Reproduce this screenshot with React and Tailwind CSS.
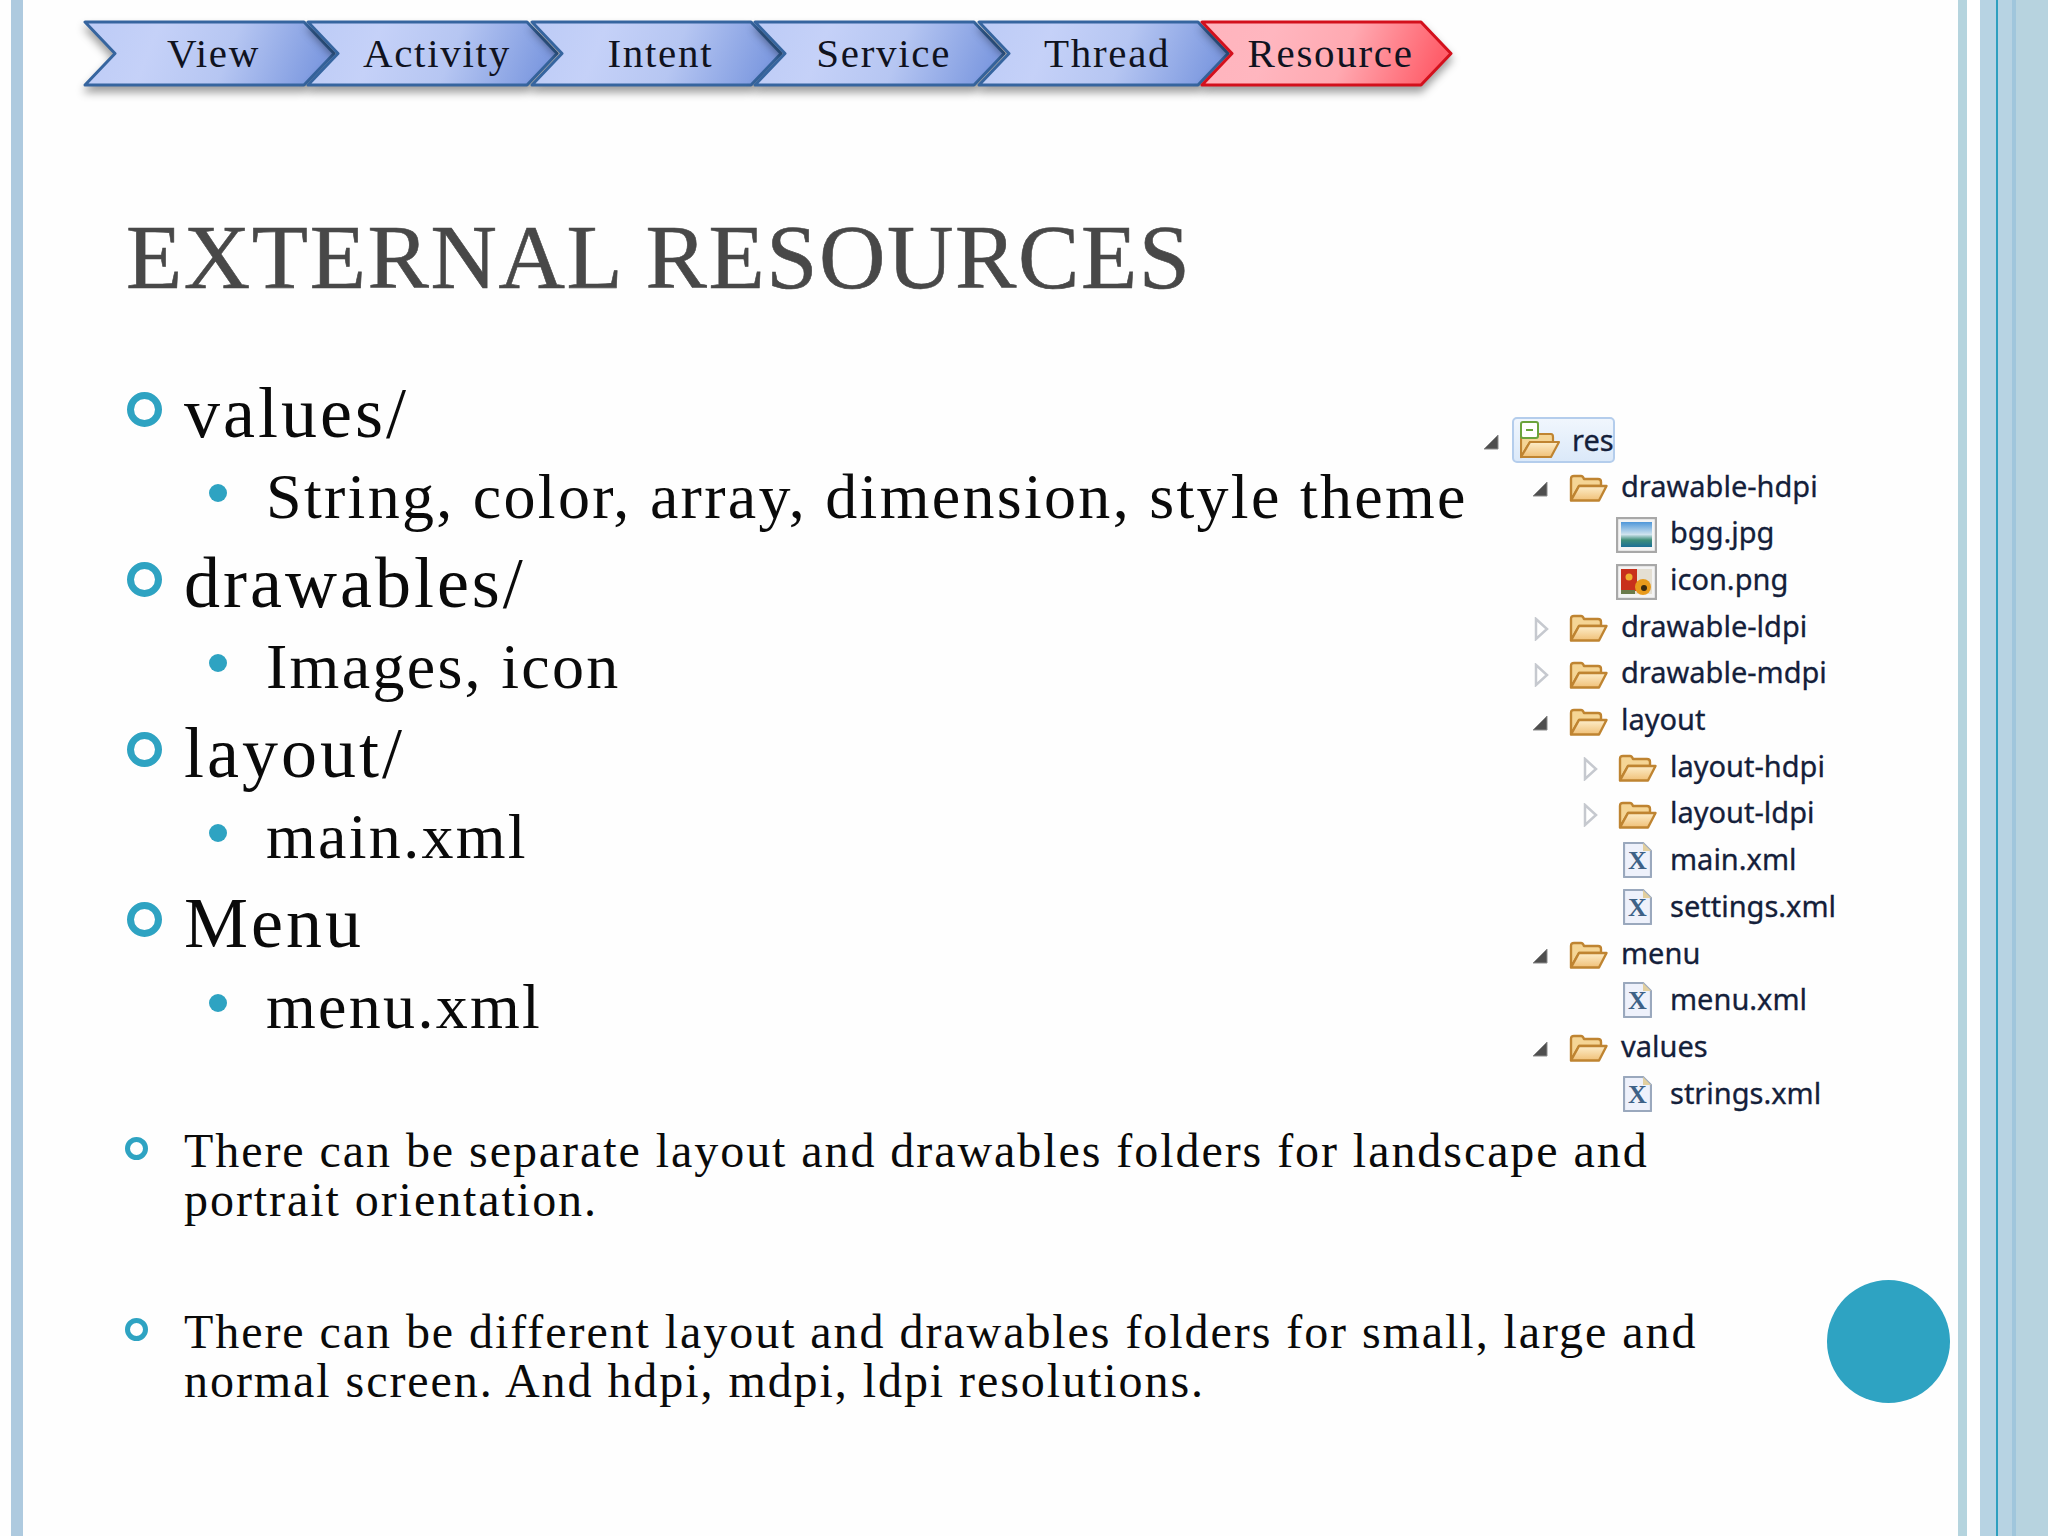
const serif = "font-['Liberation_Serif',serif]";

const steps = ["View", "Activity", "Intent", "Service", "Thread", "Resource"];

function Chevron({ label, index }) {
  const red = label === "Resource";
  const id = `chev-${index}`;
  return (
    <div className={`relative flex h-[65px] w-[250px] shrink-0 items-center justify-center pl-[9px] ${index > 0 ? "-ml-[26.6px]" : ""}`}>
      <svg className="absolute inset-0 overflow-visible drop-shadow-[0_6px_4px_rgba(0,0,0,0.38)]" width="250" height="65" viewBox="0 0 250 65">
        <defs>
          <linearGradient id={id} x1="0" y1="0" x2="1" y2="0.1">
            <stop offset="0" stopColor={red ? "#ffb4bd" : "#bccbf6"} />
            <stop offset="0.3" stopColor={red ? "#ffb6bf" : "#c5d1f8"} />
            <stop offset="0.62" stopColor={red ? "#ffa9b1" : "#b6c6f2"} />
            <stop offset="1" stopColor={red ? "#ff5f6b" : "#7e9ae0"} />
          </linearGradient>
        </defs>
        <polygon
          points="1,1 220,1 250,32.5 220,64 1,64 31,32.5"
          fill={`url(#${id})`}
          stroke={red ? "#d3101c" : "#36659f"}
          strokeWidth="3"
          strokeLinejoin="round"
        />
      </svg>
      <span className={`relative -mt-[1px] text-[41px] leading-none tracking-[1.7px] text-[#10131f] ${serif}`}>{label}</span>
    </div>
  );
}

function Ring({ className }) {
  return <span className={`block shrink-0 rounded-full border-[#2ea3c2] ${className}`} />;
}

function ListGroup({ head, sub }) {
  return (
    <div className="flex flex-col">
      <div className="flex h-[80px] items-start">
        <Ring className="mt-[19px] mr-[22px] h-[35px] w-[35px] border-[7px]" />
        <span className="text-[72px] leading-[80px] tracking-[3px] whitespace-nowrap">{head}</span>
      </div>
      <div className="flex h-[85px] items-start pl-[82px]">
        <span className="mt-[31px] mr-[39px] block h-[18px] w-[18px] shrink-0 rounded-full bg-[#2ea3c2]" />
        <span className="text-[64px] leading-[87px] tracking-[2.3px] whitespace-nowrap">{sub}</span>
      </div>
    </div>
  );
}

function Folder({ id }) {
  return (
    <svg width="39" height="28" viewBox="0 0 39 28" className="mt-[3px]">
      <defs>
        <linearGradient id={id} x1="0" y1="0" x2="0" y2="1">
          <stop offset="0" stopColor="#fdeecb" />
          <stop offset="1" stopColor="#f0c077" />
        </linearGradient>
      </defs>
      <path d="M2 25 V5 Q2 2 5 2 H12 Q14 2 15 5 H29 Q32 5 32 8 V12 H10 L2 26 Z" fill="#f5d595" stroke="#bf8431" strokeWidth="2.4" strokeLinejoin="round" />
      <path d="M2 26.5 L10 12 H37.5 L30 26.5 Z" fill={`url(#${id})`} stroke="#bf8431" strokeWidth="2.4" strokeLinejoin="round" />
    </svg>
  );
}

function RootFolder() {
  return (
    <svg width="40" height="38" viewBox="0 0 40 38">
      <defs>
        <linearGradient id="root-f" x1="0" y1="0" x2="0" y2="1">
          <stop offset="0" stopColor="#fdeecb" />
          <stop offset="1" stopColor="#f0c077" />
        </linearGradient>
      </defs>
      <path d="M1 35 V15 H14 L17 13 H31 Q33 13 33 16 V21 H10 L1 36 Z" fill="#f5d595" stroke="#bf8431" strokeWidth="2.2" strokeLinejoin="round" />
      <path d="M1 36 L10 21 H39 L31 36 Z" fill="url(#root-f)" stroke="#bf8431" strokeWidth="2.2" strokeLinejoin="round" />
      <rect x="1" y="1" width="17" height="16" rx="2" fill="#ffffff" stroke="#6aa33c" strokeWidth="2" />
      <path d="M6 9 H13" stroke="#6aa33c" strokeWidth="2" />
    </svg>
  );
}

function ImageIcon({ kind }) {
  return (
    <svg width="41" height="36" viewBox="0 0 41 36" className="-ml-[2px] mt-[4px]">
      <defs>
        <linearGradient id="sky" x1="0" y1="0" x2="0" y2="1">
          <stop offset="0" stopColor="#4f97d9" />
          <stop offset="0.5" stopColor="#cfe3ee" />
          <stop offset="0.72" stopColor="#3f8f7a" />
          <stop offset="1" stopColor="#1c6f96" />
        </linearGradient>
      </defs>
      <rect x="1" y="1" width="39" height="34" fill="#f4f4f4" stroke="#a8a8a8" strokeWidth="2.4" />
      {kind === "bgg" ? (
        <rect x="5" y="5" width="31" height="25" fill="url(#sky)" />
      ) : (
        <g>
          <rect x="5" y="5" width="31" height="25" fill="#e4dfd3" />
          <rect x="5" y="5" width="16" height="22" fill="#c8301c" />
          <circle cx="13" cy="13" r="3.5" fill="#f0b030" />
          <circle cx="27" cy="23" r="8" fill="#e89a1c" />
          <circle cx="28" cy="24" r="3" fill="#3a2a10" />
          <rect x="5" y="26" width="14" height="4" fill="#6a7a4a" />
        </g>
      )}
    </svg>
  );
}

function XmlIcon() {
  return (
    <svg width="29" height="36" viewBox="0 0 29 36" className="ml-[5px]">
      <path d="M1 1 H20 L28 9 V35 H1 Z" fill="#eef1fb" stroke="#9aa8bd" strokeWidth="2.2" strokeLinejoin="round" />
      <path d="M20 1 V9 H28 Z" fill="#e2cf9f" />
      <text x="14.5" y="27" textAnchor="middle" fontSize="26" fontWeight="700" fill="#3d6187" fontFamily="Liberation Serif, serif">X</text>
    </svg>
  );
}

function Arrow({ open }) {
  if (open) {
    return (
      <svg width="16" height="16" viewBox="0 0 16 16" className="mt-[5px]">
        <polygon points="15,1 15,15 1,15" fill="#4e4e4e" stroke="#8a8a8a" strokeWidth="1" />
      </svg>
    );
  }
  return (
    <svg width="18" height="24" viewBox="0 0 18 24" className="mt-[4px]">
      <polygon points="4,2 15,12 4,22" fill="#ffffff" stroke="#c6c9cf" strokeWidth="2.5" />
    </svg>
  );
}

const treeRows = [
  { level: 1, arrow: "open", icon: "folder", label: "drawable-hdpi" },
  { level: 2, icon: "bgg", label: "bgg.jpg" },
  { level: 2, icon: "png", label: "icon.png" },
  { level: 1, arrow: "closed", icon: "folder", label: "drawable-ldpi" },
  { level: 1, arrow: "closed", icon: "folder", label: "drawable-mdpi" },
  { level: 1, arrow: "open", icon: "folder", label: "layout" },
  { level: 2, arrow: "closed", icon: "folder", label: "layout-hdpi" },
  { level: 2, arrow: "closed", icon: "folder", label: "layout-ldpi" },
  { level: 2, icon: "xml", label: "main.xml" },
  { level: 2, icon: "xml", label: "settings.xml" },
  { level: 1, arrow: "open", icon: "folder", label: "menu" },
  { level: 2, icon: "xml", label: "menu.xml" },
  { level: 1, arrow: "open", icon: "folder", label: "values" },
  { level: 2, icon: "xml", label: "strings.xml" },
];

function TreeRow({ row, index }) {
  return (
    <div className={`flex h-[46.7px] items-center ${row.level === 1 ? "pl-[49px]" : "pl-[98px]"}`}>
      <span className="flex w-[37px] shrink-0 items-center">{row.arrow ? <Arrow open={row.arrow === "open"} /> : null}</span>
      <span className="flex w-[53px] shrink-0 items-center">
        {row.icon === "folder" && <Folder id={`folder-${index}`} />}
        {row.icon === "bgg" && <ImageIcon kind="bgg" />}
        {row.icon === "png" && <ImageIcon kind="png" />}
        {row.icon === "xml" && <XmlIcon />}
      </span>
      <span className="-ml-[1px] -mt-[3px] whitespace-nowrap text-[29px] leading-none text-[#14203a] [-webkit-text-stroke:0.3px_#14203a]">{row.label}</span>
    </div>
  );
}

function Tree() {
  return (
    <div className="mt-[43.6px] flex w-[440px] shrink-0 flex-col font-['Noto_Sans',sans-serif]">
      <div className="flex h-[46.7px] items-center">
        <span className="flex w-[29px] shrink-0 items-center"><Arrow open /></span>
        <div className="flex h-[46px] w-[103px] items-center rounded-[5px] border-2 border-[#b4cdec] bg-gradient-to-b from-[#f0f6fd] to-[#dbe9f9] pl-[6px]">
          <span className="flex w-[53px] shrink-0 items-center"><RootFolder /></span>
          <span className="-ml-[1px] -mt-[1px] text-[29px] leading-none text-[#14203a] [-webkit-text-stroke:0.3px_#14203a]">res</span>
        </div>
      </div>
      {treeRows.map((row, i) => (
        <TreeRow key={row.label} row={row} index={i} />
      ))}
    </div>
  );
}

function Note({ children, className }) {
  return (
    <div className={`flex items-start ${className}`}>
      <Ring className="-ml-[2px] mt-[11px] mr-[36px] h-[23px] w-[23px] border-[5px]" />
      <p className="text-[48px] leading-[49.5px] tracking-[1.94px] whitespace-nowrap">{children}</p>
    </div>
  );
}

export default function App() {
  return (
    <div className={`relative flex h-[1536px] w-[2048px] overflow-hidden bg-[#fefefe] text-[#0a0a0a] ${serif}`}>
      <div className="ml-[11px] w-[12px] shrink-0 bg-[#aecadf]" />

      <main className="flex min-w-0 flex-1 flex-col">
        <div className="flex pl-[61px] pt-[21px]">
          {steps.map((s, i) => (
            <Chevron key={s} label={s} index={i} />
          ))}
        </div>

        <div className="pl-[104px]">
          <h1 className="mt-[125px] -ml-[1px] text-[92px] font-normal leading-[92px] tracking-[1.6px] text-[#484848] whitespace-nowrap [-webkit-text-stroke:0.6px_#484848]">
            EXTERNAL RESOURCES
          </h1>

          <div className="mt-[70px] flex">
            <div className="flex w-[1356px] shrink-0 flex-col gap-[5px]">
              <ListGroup head="values/" sub="String, color, array, dimension, style theme" />
              <ListGroup head="drawables/" sub="Images, icon" />
              <ListGroup head="layout/" sub="main.xml" />
              <ListGroup head="Menu" sub="menu.xml" />
            </div>
            <Tree />
          </div>

          <Note className="mt-[9px]">
            There can be separate layout and drawables folders for landscape and
            <br />
            portrait orientation.
          </Note>
          <Note className="mt-[82px]">
            There can be different layout and drawables folders for small, large and
            <br />
            normal screen. And hdpi, mdpi, ldpi resolutions.
          </Note>
        </div>
      </main>

      <div className="flex shrink-0">
        <div className="w-[9px] bg-[#b5d4de]" />
        <div className="w-[13px] bg-white" />
        <div className="w-[16px] bg-[#b7d3e3]" />
        <div className="w-[2px] bg-[#2e9fbf]" />
        <div className="w-[14px] bg-[#b7d3e3]" />
        <div className="w-[4px] bg-[#a0c6dc]" />
        <div className="w-[32px] bg-[#b7d3df]" />
      </div>

      <div className="absolute left-[1827px] top-[1280px] h-[123px] w-[123px] rounded-full bg-[#2ea3c2]" />
    </div>
  );
}
